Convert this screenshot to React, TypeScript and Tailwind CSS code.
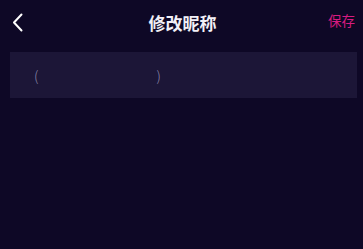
import React from "react";

export default function App() {
  return (
    <div
      className="w-[363px] h-[249px] bg-[#0e0826] flex flex-col"
      style={{ fontFamily: '"Noto Sans CJK SC", "Noto Sans", sans-serif' }}
    >
      <div className="relative h-[44px] flex items-center justify-center">
        <svg
          className="absolute left-[12px] top-[13px]"
          width="11"
          height="19"
          viewBox="0 0 11 19"
          fill="none"
        >
          <path
            d="M9.5 1.5L2 9.5L9.5 17.5"
            stroke="#ffffff"
            strokeWidth="2"
            strokeLinecap="round"
            strokeLinejoin="round"
          />
        </svg>
        <span className="ml-[2px] text-[17px] font-bold text-[#f2f0f7] leading-none">修改昵称</span>
        <span className="absolute right-[8px] top-[14px] text-[13.5px] text-[#d81b80] leading-none">保存</span>
      </div>
      <div className="ml-[10px] mr-[6px] mt-[8px] h-[46px] bg-[#1c1637] flex items-center pl-[24px]">
        <span className="text-[14px] font-light text-[#8c88aa] leading-none">(</span>
        <span className="ml-[118px] text-[14px] font-light text-[#8c88aa] leading-none">)</span>
      </div>
    </div>
  );
}
